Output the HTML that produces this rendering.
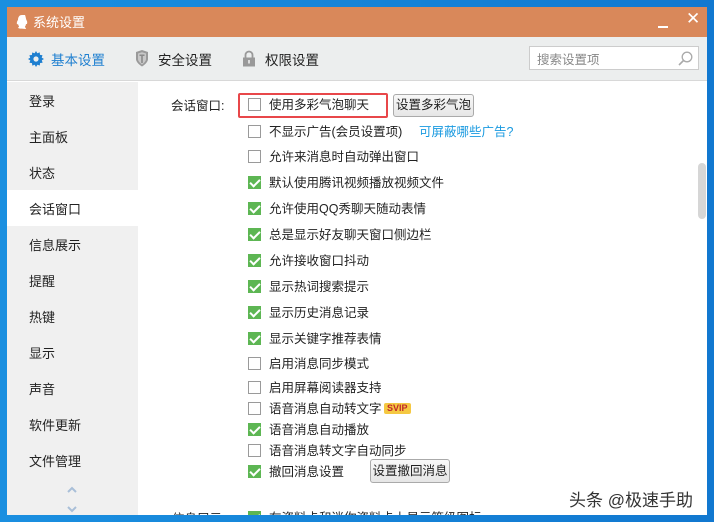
<!DOCTYPE html>
<html><head><meta charset="utf-8"><style>
*{margin:0;padding:0;box-sizing:border-box}
body{width:714px;height:522px;overflow:hidden;background:linear-gradient(90deg,#1a8fe0,#1178d0);font-family:"Liberation Sans","Noto Sans CJK SC",sans-serif;font-size:13px;color:#222;position:relative}
.win span{margin-top:-2px}
.win span.nb{margin-top:0}
.win{position:absolute;left:7px;top:7px;width:700px;height:508px;background:#fff;overflow:hidden}
.title{position:absolute;left:0;top:0;width:700px;height:30px;background:#d9885a;color:#fff;font-size:13px}
.tb{position:absolute;left:0;top:30px;width:700px;height:44px;background:#eceeee;border-bottom:1px solid #d8d8d8}
.side{position:absolute;left:0;top:75px;width:131px;height:433px;background:#f0f0f0}
.si{position:absolute;left:22px;font-size:13px;color:#222}
.abs{position:absolute}
.cb{position:absolute;left:241px;width:13px;height:13px;border:1px solid #9a9a9a;background:#fff}
.cb.on{background:#5db653;border-color:#5db653}
.cb.on::after{content:"";position:absolute;left:3px;top:0px;width:4px;height:8px;border:solid #fff;border-width:0 2px 2px 0;transform:rotate(45deg)}
.t{position:absolute;left:262px;font-size:12.5px;color:#222;white-space:nowrap}
.btn{position:absolute;border:1px solid #aaa;border-radius:3px;background:linear-gradient(#f8f8f8,#e6e6e6);font-size:12.5px;text-align:center;line-height:21px}
</style></head><body>
<div class="win">
<div class="title">
<svg class="abs" style="left:8px;top:7px" width="14" height="16" viewBox="0 0 14 16"><path d="M7 1C4 1 3 3.5 3 6 2 7 1.5 9 2 10.5 2.5 10 3 10 3 10 3.5 12 5 13 3 13.5 3 15 7 14.5 11 15 11 13.5 9 13 10.5 12 11 10 11 10 11.5 10 12 10.5 12.5 9 12 7 11 6 11 3.5 10 1 7 1Z" fill="#fff"/></svg>
<span class="abs" style="left:26px;top:7px">系统设置</span>
<div class="abs" style="left:651px;top:19px;width:10px;height:2px;background:#fff"></div>
<span class="abs" style="left:679px;top:4px;font-size:17px">✕</span>
</div>
<div class="tb">
<svg class="abs" style="left:21px;top:14px" width="16" height="16" viewBox="0 0 16 16"><path d="M8 0l1.3 2.2 2.4-.8.3 2.5 2.5.3-.8 2.4L16 8l-2.2 1.3.8 2.4-2.5.3-.3 2.5-2.4-.8L8 16l-1.3-2.2-2.4.8-.3-2.5-2.5-.3.8-2.4L0 8l2.2-1.3-.8-2.4 2.5-.3.3-2.5 2.4.8z" fill="#1e7fd0"/><circle cx="8" cy="8" r="2.6" fill="#eceeee"/></svg>
<span class="abs" style="left:44px;top:14px;color:#1e7fd0;font-size:13.5px">基本设置</span>
<svg class="abs" style="left:128px;top:13px" width="14" height="17" viewBox="0 0 14 17"><path d="M1 2L7 0 13 2V9C13 13 7 16.5 7 16.5S1 13 1 9Z" fill="#9a9a9a"/><path d="M3 3.5L7 2.3 11 3.5V9C11 12 7 14.5 7 14.5S3 12 3 9Z" fill="#c8c8c8"/><path d="M4.5 4.5h5v1.5h-1.7v7h-1.6v-7H4.5z" fill="#8a8a8a"/></svg>
<span class="abs" style="left:151px;top:14px;font-size:13.5px">安全设置</span>
<svg class="abs" style="left:235px;top:13px" width="14" height="17" viewBox="0 0 14 17"><path d="M3.5 8V5a3.5 3.5 0 0 1 7 0v3" stroke="#999" stroke-width="1.8" fill="none"/><rect x="1" y="7.5" width="12" height="9" fill="#999"/><rect x="6.2" y="10" width="1.6" height="3.5" fill="#eee"/></svg>
<span class="abs" style="left:258px;top:14px;font-size:13.5px">权限设置</span>
<div class="abs" style="left:522px;top:9px;width:170px;height:24px;background:#fff;border:1px solid #ccc"></div>
<span class="abs" style="left:530px;top:14px;color:#888;font-size:12.5px">搜索设置项</span>
<svg class="abs" style="left:671px;top:14px" width="15" height="15" viewBox="0 0 15 15"><circle cx="9" cy="6" r="4.8" stroke="#aaa" stroke-width="1.3" fill="none"/><path d="M5.5 9.5L1 14" stroke="#aaa" stroke-width="1.6"/></svg>
</div>
<div class="side">
<div class="abs" style="left:0;top:108px;width:131px;height:36px;background:#fff"></div>
<span class="si" style="top:11px">登录</span>
<span class="si" style="top:47px">主面板</span>
<span class="si" style="top:83px">状态</span>
<span class="si" style="top:119px">会话窗口</span>
<span class="si" style="top:155px">信息展示</span>
<span class="si" style="top:191px">提醒</span>
<span class="si" style="top:227px">热键</span>
<span class="si" style="top:263px">显示</span>
<span class="si" style="top:299px">声音</span>
<span class="si" style="top:335px">软件更新</span>
<span class="si" style="top:371px">文件管理</span>
<svg class="abs" style="left:59px;top:403px" width="12" height="30" viewBox="0 0 12 30"><path d="M2 7l4-4 4 4M2 22l4 4 4-4" stroke="#a9bfd8" stroke-width="2" fill="none"/></svg>
</div>
<span class="abs" style="left:164px;top:90px;font-size:12.5px">会话窗口:</span>
<div class="abs" style="left:231px;top:86px;width:150px;height:25px;border:2px solid #e8474a;border-radius:2px"></div>
<div class="btn" style="left:386px;top:87px;width:81px;height:23px">设置多彩气泡</div>
<div class="cb" style="top:91px"></div><span class="t" style="top:89px">使用多彩气泡聊天</span>
<div class="cb" style="top:118px"></div><span class="t" style="top:116px">不显示广告(会员设置项)</span><span class="abs" style="left:412px;top:116px;color:#1a9ae0;font-size:12.5px">可屏蔽哪些广告?</span>
<div class="cb" style="top:143px"></div><span class="t" style="top:141px">允许来消息时自动弹出窗口</span>
<div class="cb on" style="top:169px"></div><span class="t" style="top:167px">默认使用腾讯视频播放视频文件</span>
<div class="cb on" style="top:195px"></div><span class="t" style="top:193px">允许使用QQ秀聊天随动表情</span>
<div class="cb on" style="top:221px"></div><span class="t" style="top:219px">总是显示好友聊天窗口侧边栏</span>
<div class="cb on" style="top:247px"></div><span class="t" style="top:245px">允许接收窗口抖动</span>
<div class="cb on" style="top:273px"></div><span class="t" style="top:271px">显示热词搜索提示</span>
<div class="cb on" style="top:299px"></div><span class="t" style="top:297px">显示历史消息记录</span>
<div class="cb on" style="top:325px"></div><span class="t" style="top:323px">显示关键字推荐表情</span>
<div class="cb" style="top:350px"></div><span class="t" style="top:348px">启用消息同步模式</span>
<div class="cb" style="top:374px"></div><span class="t" style="top:372px">启用屏幕阅读器支持</span>
<div class="cb" style="top:395px"></div><span class="t" style="top:393px">语音消息自动转文字</span>
<span class="abs nb" style="left:377px;top:396px;background:#f5c842;color:#c0282a;font-size:9px;font-weight:bold;padding:0 3px;border-radius:2px;line-height:11px">SVIP</span>
<div class="cb on" style="top:416px"></div><span class="t" style="top:414px">语音消息自动播放</span>
<div class="cb" style="top:437px"></div><span class="t" style="top:435px">语音消息转文字自动同步</span>
<div class="cb on" style="top:458px"></div><span class="t" style="top:456px">撤回消息设置</span>
<div class="btn" style="left:363px;top:452px;width:80px;height:24px;line-height:22px">设置撤回消息</div>
<span class="abs" style="left:165px;top:503px;font-size:12.5px">信息展示:</span>
<div class="cb on" style="top:504px"></div><span class="t" style="top:502px">在资料卡和迷你资料卡上显示等级图标</span>
<div class="abs" style="left:691px;top:156px;width:8px;height:56px;background:#d6d6d6;border-radius:4px"></div>
</div>
<span class="abs" style="left:569px;top:486px;font-size:17px;color:#333;text-shadow:0 0 2px #fff,0 0 2px #fff">头条 @极速手助</span>
</body></html>
